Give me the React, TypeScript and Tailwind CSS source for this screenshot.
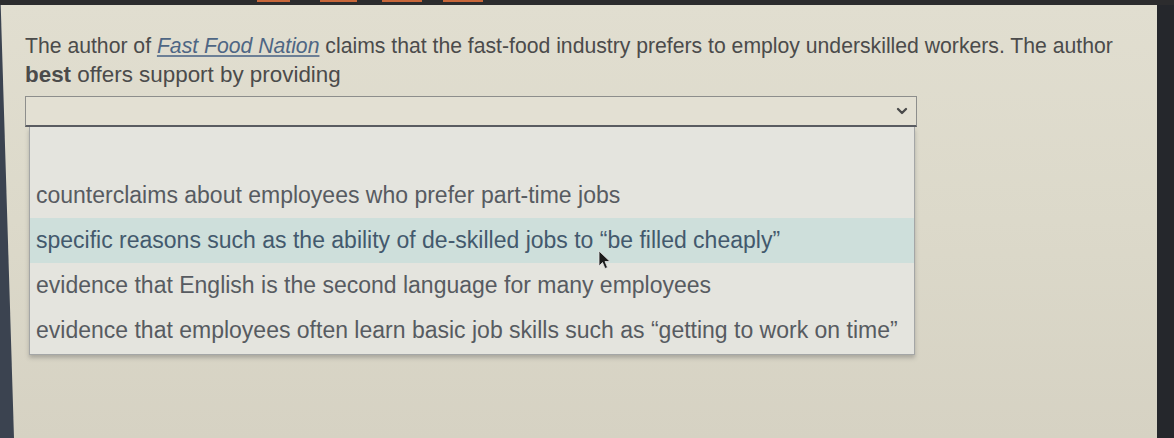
import { ChevronDown } from 'lucide-react'

const options = [
  '',
  'counterclaims about employees who prefer part-time jobs',
  'specific reasons such as the ability of de-skilled jobs to \u201cbe filled cheaply\u201d',
  'evidence that English is the second language for many employees',
  'evidence that employees often learn basic job skills such as \u201cgetting to work on time\u201d',
]

const highlighted = 2

function Cursor() {
  return (
    <svg className="pointer-events-none absolute left-[598px] top-[250px] h-[20px] w-[14px]" viewBox="0 0 14 20">
      <path d="M1 1 L1 16 L4.5 12.5 L7 18.5 L9.5 17.5 L7 11.5 L12 11.5 Z" fill="#1c1c1c" stroke="#e5e5e5" strokeWidth="0.8" />
    </svg>
  )
}

export default function App() {
  return (
    <div
      className="relative flex h-[438px] w-[1174px] flex-col overflow-hidden bg-[#2a2d33]"
      style={{ fontFamily: '"Liberation Sans", Arial, sans-serif' }}
    >
      {/* top edge of the monitor bezel */}
      <div className="relative h-[5px] shrink-0 bg-[#2c2c2e]">
        <div className="absolute left-[257px] top-0 h-[2px] w-[33px] bg-[#c8673a]" />
        <div className="absolute left-[320px] top-0 h-[2px] w-[37px] bg-[#c8673a]" />
        <div className="absolute left-[382px] top-0 h-[2px] w-[40px] bg-[#c8673a]" />
        <div className="absolute left-[443px] top-0 h-[2px] w-[40px] bg-[#c8673a]" />
      </div>

      <div className="flex flex-1 bg-linear-to-b from-[#e1ded0] via-[#dcd9ca] to-[#d6d2c3]">
        <div className="w-[14px] shrink-0 bg-[#3b4350] [clip-path:polygon(0_0,0_100%,100%_100%,5%_0)]" />

        <div className="flex-1 pl-[11px] pt-[26px]">
          <p className="w-[1120px] text-[21.2px] leading-[29px] text-[#4b4b4b]">
            The author of{' '}
            <span className="italic text-[#4e6684] underline decoration-[#6c7f96] underline-offset-2">Fast Food Nation</span>{' '}
            claims that the fast-food industry prefers to employ underskilled workers. The author
            <br />
            <span className="text-[22.4px]">
              <span className="font-bold">best</span> offers support by providing
            </span>
          </p>

          <div className="mt-[7px] flex h-[31px] w-[892px] items-center justify-end border border-b-2 border-[#8d8e8c] border-b-[#5b5d62] bg-[#e3e0d3] pr-[6px]">
            <ChevronDown className="h-[16px] w-[16px] text-[#4a4a4a]" strokeWidth={3.5} />
          </div>

          <div className="ml-[4px] w-[886px] border border-t-0 border-[#a4a6a6] bg-[#e4e4de] pb-[1px] shadow-[0_3px_4px_rgba(90,90,90,0.35)]">
            {options.map((o, i) => (
              <div
                key={i}
                className={
                  (i === 0 ? 'h-[46px] ' : 'h-[45px] ') +
                  (i === highlighted ? 'bg-[#cedfdb] text-[#43596d] ' : 'text-[#575b61] ') +
                  'flex items-center pl-[6px] text-[23px] whitespace-nowrap'
                }
              >
                {o}
              </div>
            ))}
          </div>
        </div>

        <div className="w-[17px] shrink-0 bg-[#25272c]" />
      </div>

      <Cursor />
    </div>
  )
}
